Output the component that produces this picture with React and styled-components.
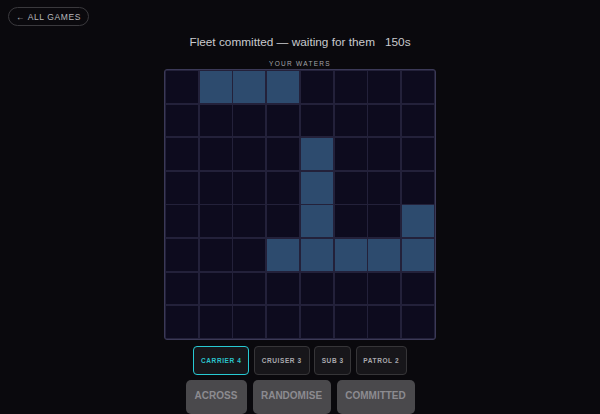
import styled, { createGlobalStyle } from "styled-components";

const GlobalStyle = createGlobalStyle`
  html, body {
    margin: 0;
    padding: 0;
    background: #0a090d;
    height: 100%;
    overflow: hidden;
  }
  body {
    font-family: "Liberation Sans", Arial, sans-serif;
    color: #c8c8cc;
  }
`;

const Page = styled.div`
  width: 600px;
  height: 414px;
  padding: 7px 8px 0;
  box-sizing: border-box;
  display: flex;
  flex-direction: column;
  align-items: center;
`;

const TopBar = styled.div`
  align-self: stretch;
  display: flex;
`;

const BackPill = styled.button`
  height: 19px;
  width: 81px;
  padding: 0;
  border: 1px solid #3a393d;
  border-radius: 10px;
  background: transparent;
  color: #b8b8bc;
  font-family: inherit;
  font-size: 8.5px;
  letter-spacing: 0.6px;
  display: flex;
  align-items: center;
  justify-content: center;
  box-sizing: border-box;
`;

const Title = styled.div`
  margin-top: 8px;
  font-size: 11.8px;
  line-height: 16px;
  color: #c9c9cd;
  display: flex;
  align-items: baseline;
`;

const Timer = styled.span`
  margin-left: 10px;
`;

const Label = styled.div`
  margin-top: 10px;
  font-size: 6.5px;
  line-height: 8px;
  letter-spacing: 1.3px;
  color: #a4a4aa;
`;

const Board = styled.div`
  margin-top: 1px;
  width: 272px;
  height: 273px;
  box-sizing: border-box;
  border: 1px solid #3b3957;
  border-radius: 3px;
  padding: 1px;
  background: #23213a;
  display: grid;
  grid-template-columns: repeat(8, 1fr);
  grid-template-rows: repeat(8, 1fr);
  gap: 1.75px;
`;

const Cell = styled.div`
  background: ${(p) => (p.ship ? "#2d4b6e" : "#0d0b1e")};
`;

const ShipRow = styled.div`
  margin-top: 6px;
  display: flex;
  gap: 4.5px;
`;

const ShipButton = styled.button`
  height: 29px;
  width: ${(p) => p.w}px;
  padding: 0;
  box-sizing: border-box;
  border-radius: 4px;
  border: ${(p) => (p.active ? "1.5px solid #27c9d3" : "1px solid #363538")};
  background: #17161a;
  color: ${(p) => (p.active ? "#2bc3cc" : "#a9a9ae")};
  font-family: inherit;
  font-weight: 700;
  font-size: 6.5px;
  letter-spacing: 0.6px;
`;

const ActionRow = styled.div`
  margin-top: 5px;
  display: flex;
  gap: 6px;
`;

const ActionButton = styled.button`
  height: 34px;
  width: ${(p) => p.w}px;
  padding: 10px 0 0;
  border: none;
  border-radius: 5px;
  background: #4a494c;
  color: #8c8b90;
  font-family: inherit;
  font-weight: 700;
  font-size: 10px;
  display: flex;
  align-items: flex-start;
  justify-content: center;
  box-sizing: border-box;
`;

const shipCells = new Set([
  "0-1", "0-2", "0-3",
  "2-4", "3-4", "4-4",
  "4-7",
  "5-3", "5-4", "5-5", "5-6", "5-7",
]);

const ships = [
  { name: "CARRIER 4", w: 56, active: true },
  { name: "CRUISER 3", w: 56 },
  { name: "SUB 3", w: 37 },
  { name: "PATROL 2", w: 51 },
];

const actions = [
  { name: "ACROSS", w: 61 },
  { name: "RANDOMISE", w: 78 },
  { name: "COMMITTED", w: 78 },
];

export default function App() {
  const cells = [];
  for (let r = 0; r < 8; r++) {
    for (let c = 0; c < 8; c++) {
      cells.push(<Cell key={`${r}-${c}`} ship={shipCells.has(`${r}-${c}`)} />);
    }
  }

  return (
    <>
      <GlobalStyle />
      <Page>
        <TopBar>
          <BackPill>← ALL GAMES</BackPill>
        </TopBar>
        <Title>
          Fleet committed — waiting for them
          <Timer>150s</Timer>
        </Title>
        <Label>YOUR WATERS</Label>
        <Board>{cells}</Board>
        <ShipRow>
          {ships.map((s) => (
            <ShipButton key={s.name} w={s.w} active={s.active}>
              {s.name}
            </ShipButton>
          ))}
        </ShipRow>
        <ActionRow>
          {actions.map((a) => (
            <ActionButton key={a.name} w={a.w}>
              {a.name}
            </ActionButton>
          ))}
        </ActionRow>
      </Page>
    </>
  );
}
